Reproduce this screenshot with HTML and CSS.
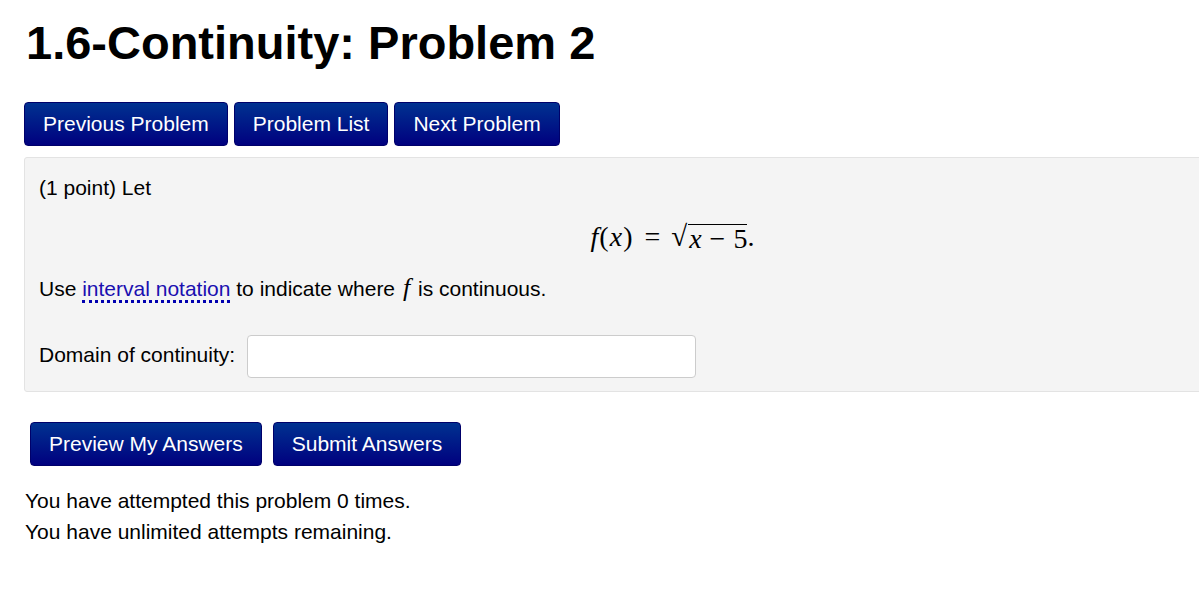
FILE: index.html
```html
<!DOCTYPE html>
<html>
<head>
<meta charset="utf-8">
<link rel="stylesheet" href="styles.css">
</head>
<body>
<div class="page">
  <h1 class="title">1.6-Continuity: Problem 2</h1>
  <div class="nav">
    <a class="btn">Previous Problem</a>
    <a class="btn">Problem List</a>
    <a class="btn">Next Problem</a>
  </div>
  <div class="problem">
    <p class="line">(1 point) Let</p>
    <div class="display">
      <span class="math"><i>f</i><span class="paren">(</span><i>x</i><span class="paren">)</span><span class="eq">=</span><span class="sqrt"><span class="radical">√</span><span class="radicand"><i>x</i><span class="minus">−</span>5</span></span>.</span>
    </div>
    <p class="line">Use <span class="knowl">interval notation</span> to indicate where <i class="mi">f</i> is continuous.</p>
    <div class="answer">
      <label class="label">Domain of continuity:</label>
      <input class="field" type="text">
    </div>
  </div>
  <div class="submit">
    <a class="btn">Preview My Answers</a>
    <a class="btn">Submit Answers</a>
  </div>
  <p class="status">You have attempted this problem 0 times.<br>You have unlimited attempts remaining.</p>
</div>
</body>
</html>
```
FILE: styles.css
```css
html, body {
  margin: 0;
  padding: 0;
  background: #fff;
  overflow: hidden;
}
body {
  font-family: "Liberation Sans", Arial, sans-serif;
  color: #000;
}
.page {
  padding: 0 0 0 24px;
}
.title {
  margin: 0;
  padding-top: 16px;
  padding-left: 2px;
  font-size: 47px;
  line-height: 54px;
  font-weight: bold;
}
.nav {
  display: flex;
  gap: 6px;
  margin-top: 32px;
}
.btn {
  display: inline-flex;
  align-items: center;
  justify-content: center;
  height: 44px;
  box-sizing: border-box;
  padding: 0 18px;
  color: #fff;
  font-size: 21px;
  border-radius: 4px;
  background: linear-gradient(#003290, #00007f);
  border: 1px solid #00006a;
}
.problem {
  margin-top: 11px;
  width: 1200px;
  background: #f4f4f4;
  border: 1px solid #e3e3e3;
  border-radius: 3px;
  padding: 18px 14px 13px 14px;
  box-sizing: border-box;
}
.line {
  margin: 0;
  font-size: 21px;
  line-height: 24px;
}
.display {
  padding: 23px 0 23px 0;
  height: 30px;
  width: 1132px;
  display: flex;
  justify-content: center;
  align-items: center;
}
.math {
  font-family: "Liberation Serif", serif;
  font-size: 28px;
  line-height: 30px;
  white-space: nowrap;
  margin-left: 135px;
  margin-bottom: 4px;
  display: inline-flex;
  align-items: baseline;
}
.math i, .mi {
  font-family: "Liberation Serif", serif;
  font-style: italic;
}
.mi {
  font-size: 26px;
  margin: 0 2px;
}
.paren {
  margin: 0 1px;
}
.eq {
  margin: 0 11px;
}
.minus {
  margin: 0 8px;
}
.sqrt {
  display: inline-flex;
  align-items: flex-end;
}
.radical {
  font-size: 29px;
  line-height: 30px;
  margin-right: 1px;
}
.radicand {
  border-top: 1.5px solid #000;
  line-height: 25px;
  padding-top: 1px;
  padding-left: 1px;
}
.knowl {
  color: #1a0fb0;
  border-bottom: 3px dotted #0000b0;
}
.answer {
  display: flex;
  align-items: center;
  gap: 12px;
  margin-top: 34px;
}
.label {
  font-size: 21px;
  margin-top: -3px;
}
.field {
  width: 449px;
  height: 43px;
  box-sizing: border-box;
  border: 1px solid #cccccc;
  border-radius: 4px;
  background: #fff;
  margin: 0;
}
.submit {
  display: flex;
  gap: 11px;
  margin-top: 30px;
  padding-left: 6px;
}
.status {
  margin: 19px 0 0 1px;
  font-size: 21px;
  line-height: 31px;
}
```
